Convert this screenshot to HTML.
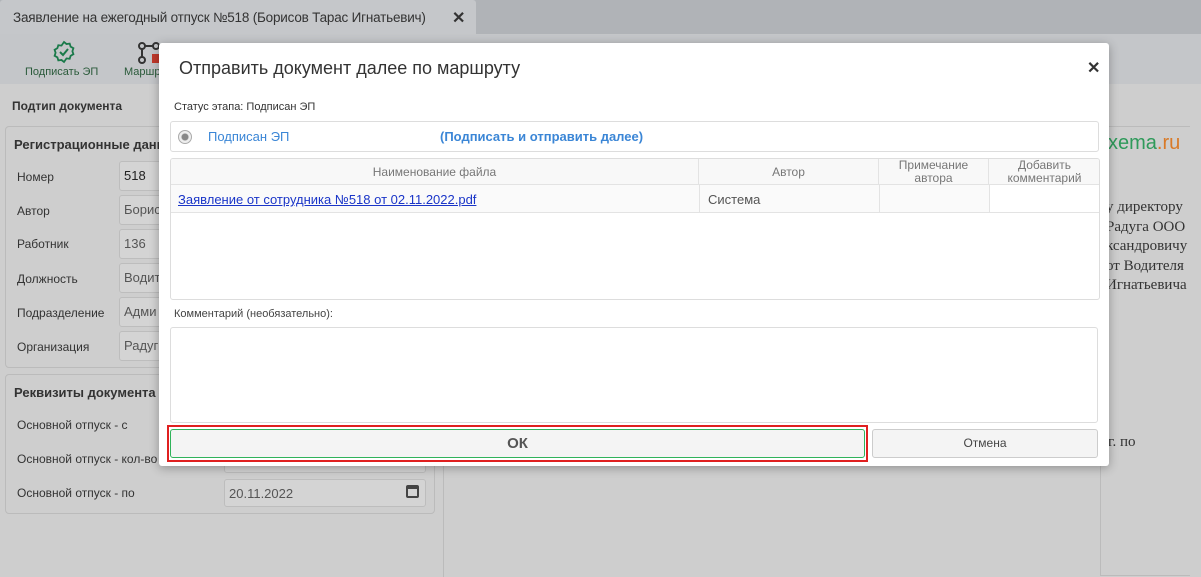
<!DOCTYPE html>
<html><head><meta charset="utf-8"><style>
*{box-sizing:border-box;margin:0;padding:0}
body{width:1201px;height:577px;overflow:hidden;font-family:"Liberation Sans","Noto Sans CJK SC",sans-serif;background:#cecece;position:relative;color:#333}
.a{position:absolute}
.lbl{font-size:12px;color:#333}
.inp{position:absolute;border:1px solid #bdbdbd;border-radius:3px;background:#d4d4d4;font-size:13px;color:#555;padding:6px 4px;height:30px}
.serif{font-family:"Liberation Serif",serif;font-size:15px;color:#333}
.c{position:absolute;border-right:1px solid #e3e3e3;font-size:12px;overflow:hidden;text-align:center;color:#777}
</style></head><body>
<div class="a" style="left:0;top:0;width:1201px;height:34px;background:#b0b3b7"></div>
<div class="a" style="left:0;top:0;width:476px;height:34px;background:#c5c7ca;border-radius:3px 3px 0 0"></div>
<div class="a" style="left:13px;top:10px;font-size:13.5px;color:#333;letter-spacing:-0.2px">Заявление на ежегодный отпуск №518 (Борисов Тарас Игнатьевич)</div>
<div class="a" style="left:452px;top:8px;font-size:16px;font-weight:bold;color:#333">✕</div>
<div class="a" style="left:0;top:34px;width:1201px;height:50px;background:#c4c6c9"></div>
<svg class="a" style="left:52px;top:40px" width="24" height="24" viewBox="0 0 24 24"><path d="M12 2l2.5 2 3.2-.4.9 3 2.8 1.6-1 3 1 3-2.8 1.6-.9 3-3.2-.4L12 22l-2.5-2-3.2.4-.9-3-2.8-1.6 1-3-1-3 2.8-1.6.9-3 3.2.4z" fill="none" stroke="#1a7a4a" stroke-width="1.8"/><path d="M8 12l3 3 5-6" fill="none" stroke="#1a7a4a" stroke-width="2"/></svg>
<div class="a" style="left:25px;top:66px;font-size:11px;color:#2a5a3a">Подписать ЭП</div>
<svg class="a" style="left:138px;top:42px" width="22" height="22"><circle cx="4" cy="4" r="3" fill="none" stroke="#333" stroke-width="2"/><circle cx="18" cy="4" r="3" fill="none" stroke="#333" stroke-width="2"/><circle cx="4" cy="18" r="3" fill="none" stroke="#333" stroke-width="2"/><path d="M7 4h8M4 7v8" stroke="#333" stroke-width="2"/><rect x="14" y="12" width="8" height="9" fill="#c0392b"/></svg>
<div class="a" style="left:124px;top:66px;font-size:11px;color:#2a5a3a">Маршр</div>
<div class="a" style="left:12px;top:99px;font-size:12px;font-weight:bold">Подтип документа</div>
<div class="a" style="left:5px;top:126px;width:430px;height:242px;border:1px solid #bbb;border-radius:4px"></div>
<div class="a" style="left:14px;top:137px;font-size:13px;font-weight:bold">Регистрационные данн</div>
<div class="a lbl" style="left:17px;top:170px">Номер</div><div class="inp" style="left:119px;top:161px;width:60px;color:#222">518</div>
<div class="a lbl" style="left:17px;top:204px">Автор</div><div class="inp" style="left:119px;top:195px;width:60px">Борис</div>
<div class="a lbl" style="left:17px;top:237px">Работник</div><div class="inp" style="left:119px;top:229px;width:60px">136</div>
<div class="a lbl" style="left:17px;top:272px">Должность</div><div class="inp" style="left:119px;top:263px;width:60px">Водит</div>
<div class="a lbl" style="left:17px;top:306px">Подразделение</div><div class="inp" style="left:119px;top:297px;width:60px">Адми</div>
<div class="a lbl" style="left:17px;top:340px">Организация</div><div class="inp" style="left:119px;top:331px;width:60px">Радуг</div>
<div class="a" style="left:5px;top:374px;width:430px;height:140px;border:1px solid #bbb;border-radius:4px"></div>
<div class="a" style="left:14px;top:385px;font-size:13px;font-weight:bold">Реквизиты документа</div>
<div class="a lbl" style="left:17px;top:418px">Основной отпуск - с</div>
<div class="a lbl" style="left:17px;top:452px">Основной отпуск - кол-во</div>
<div class="inp" style="left:224px;top:445px;width:202px;height:28px"></div>
<div class="a lbl" style="left:17px;top:486px">Основной отпуск - по</div>
<div class="inp" style="left:224px;top:479px;width:202px;height:28px">20.11.2022</div>
<div class="a" style="left:406px;top:485px;width:13px;height:13px;border:2px solid #444;border-top-width:4px;border-radius:2px"></div>
<div class="a" style="left:443px;top:84px;width:1px;height:493px;background:#bbb"></div>
<div class="a" style="left:1100px;top:126px;width:90px;height:450px;border:1px solid #bbb;border-right:none"></div>
<div class="a" style="left:1108px;top:132px;font-size:20px;color:#2e9a5a">xema<span style="color:#d97a28">.ru</span></div>
<div class="a serif" style="left:1106px;top:198px;line-height:19.5px">у директору<br>Радуга ООО<br>ксандровичу<br>от Водителя<br>Игнатьевича</div>
<div class="a serif" style="left:1108px;top:434px">г. по</div>
<div class="a" style="left:159px;top:43px;width:950px;height:423px;background:#fff;border-radius:3px;box-shadow:0 2px 10px rgba(0,0,0,.3)"></div>
<div class="a" style="left:179px;top:58px;font-size:18px;color:#333">Отправить документ далее по маршруту</div>
<div class="a" style="left:1087px;top:58px;font-size:16px;font-weight:bold;color:#333">✕</div>
<div class="a" style="left:174px;top:101px;font-size:11px;color:#333">Статус этапа: Подписан ЭП</div>
<div class="a" style="left:170px;top:121px;width:929px;height:31px;border:1px solid #ddd;border-radius:3px"></div>
<div class="a" style="left:178px;top:130px;width:14px;height:14px;border-radius:50%;border:1px solid #aaa;background:radial-gradient(#888 0 3px,#eee 4px)"></div>
<div class="a" style="left:208px;top:129px;font-size:13px;color:#3b86d6">Подписан ЭП</div>
<div class="a" style="left:440px;top:129px;font-size:13px;font-weight:bold;color:#3b86d6">(Подписать и отправить далее)</div>
<div class="a" style="left:170px;top:158px;width:930px;height:142px;border:1px solid #ddd;border-radius:3px;overflow:hidden">
<div class="a" style="left:0;top:0;width:930px;height:26px;background:#f8f8f8;border-bottom:1px solid #e3e3e3"></div>
<div class="c" style="left:0;top:0;width:528px;height:26px;line-height:26px">Наименование файла</div>
<div class="c" style="left:528px;top:0;width:180px;height:26px;line-height:26px">Автор</div>
<div class="c" style="left:708px;top:0;width:110px;height:26px;line-height:13px">Примечание<br>автора</div>
<div class="c" style="left:818px;top:0;width:111px;height:26px;line-height:13px;border-right:none">Добавить<br>комментарий</div>
<div class="a" style="left:0;top:26px;width:930px;height:28px;background:#fafafa;border-bottom:1px solid #e3e3e3"></div>
<div class="a" style="left:7px;top:33px;color:#1a35c8;text-decoration:underline;font-size:13px">Заявление от сотрудника №518 от 02.11.2022.pdf</div>
<div class="a" style="left:528px;top:26px;width:1px;height:28px;background:#e3e3e3"></div>
<div class="a" style="left:537px;top:33px;font-size:13px;color:#555">Система</div>
<div class="a" style="left:708px;top:26px;width:1px;height:28px;background:#e3e3e3"></div>
<div class="a" style="left:818px;top:26px;width:111px;height:27px;background:#fff;border-left:1px solid #e3e3e3"></div>
</div>
<div class="a" style="left:174px;top:308px;font-size:11px;color:#444">Комментарий (необязательно):</div>
<div class="a" style="left:170px;top:327px;width:928px;height:96px;border:1px solid #ddd;border-radius:3px"></div>
<div class="a" style="left:167px;top:425px;width:701px;height:37px;border:2px solid #e02020"></div>
<div class="a" style="left:170px;top:429px;width:695px;height:29px;border:1px solid #2fb35a;border-radius:3px;background:#f4f4f4;text-align:center;font-size:15px;font-weight:bold;line-height:27px;color:#555">ОК</div>
<div class="a" style="left:872px;top:429px;width:226px;height:29px;border:1px solid #ccc;border-radius:3px;background:#f4f4f4;text-align:center;font-size:12px;line-height:27px;color:#444">Отмена</div>
</body></html>
